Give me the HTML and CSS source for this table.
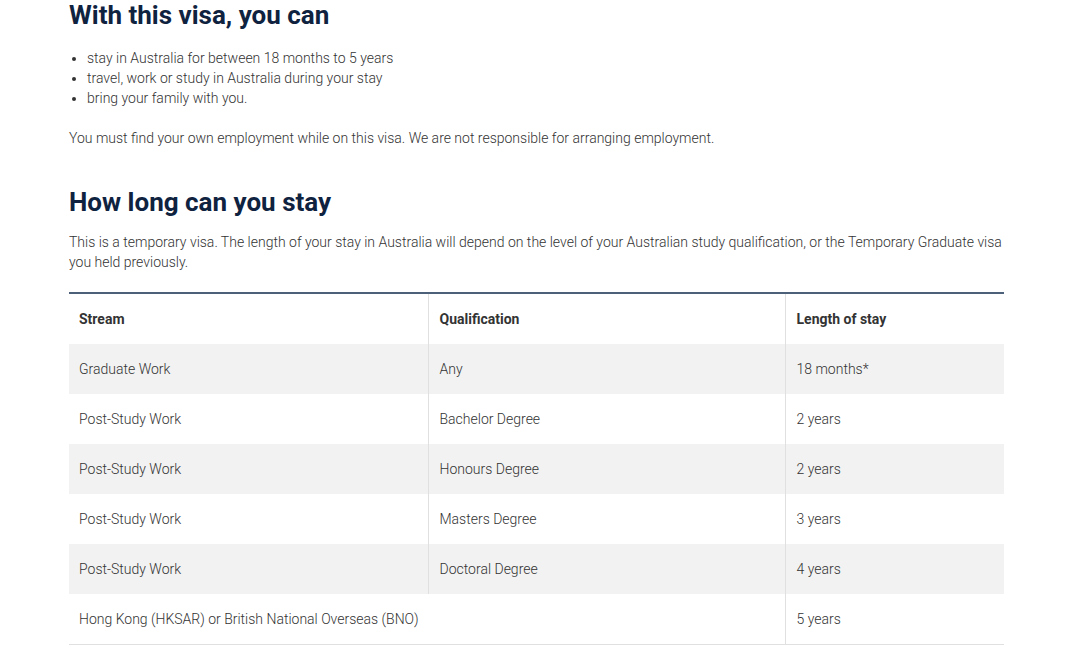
FILE: index.html
```html
<!DOCTYPE html>
<html lang="en">
<head>
<meta charset="utf-8">
<title>Temporary Graduate visa</title>
<link rel="stylesheet" href="styles.css">
</head>
<body>
<main class="content">
  <h2 class="heading heading--first">With this visa, you can</h2>
  <ul class="list">
    <li>stay in Australia for between 18 months to 5 years</li>
    <li>travel, work or study in Australia during your stay</li>
    <li>bring your family with you.</li>
  </ul>
  <p class="text">You must find your own employment while on this visa. We are not responsible for arranging employment.</p>

  <h2 class="heading heading--second">How long can you stay</h2>
  <p class="text text--intro">This is a temporary visa. The length of your stay in Australia will depend on the level of your Australian study qualification, or the Temporary Graduate visa you held previously.</p>

  <table class="stay-table">
    <colgroup>
      <col class="col-stream">
      <col class="col-qual">
      <col class="col-length">
    </colgroup>
    <thead>
      <tr>
        <th>Stream</th>
        <th>Qualification</th>
        <th>Length of stay</th>
      </tr>
    </thead>
    <tbody>
      <tr class="odd">
        <td>Graduate Work</td>
        <td>Any</td>
        <td>18 months*</td>
      </tr>
      <tr>
        <td>Post-Study Work</td>
        <td>Bachelor Degree</td>
        <td>2 years</td>
      </tr>
      <tr class="odd">
        <td>Post-Study Work</td>
        <td>Honours Degree</td>
        <td>2 years</td>
      </tr>
      <tr>
        <td>Post-Study Work</td>
        <td>Masters Degree</td>
        <td>3 years</td>
      </tr>
      <tr class="odd">
        <td>Post-Study Work</td>
        <td>Doctoral Degree</td>
        <td>4 years</td>
      </tr>
      <tr class="last">
        <td colspan="2">Hong Kong (HKSAR) or British National Overseas (BNO)</td>
        <td>5 years</td>
      </tr>
    </tbody>
  </table>
</main>
</body>
</html>
```

FILE: styles.css
```css
html, body {
  margin: 0;
  padding: 0;
  background: #ffffff;
}

body {
  font-family: Roboto, "Liberation Sans", Arial, sans-serif;
  font-size: 14px;
  font-weight: 300;
  line-height: 20px;
  color: #333333;
}

.content {
  width: 935px;
  padding-left: 69px;
}

.heading {
  font-size: 26px;
  line-height: 32px;
  font-weight: 700;
  color: #0f2340;
  margin: 0;
}

.heading--first {
  margin-top: -1px;
}

.heading--second {
  margin-top: 38px;
}

.list {
  margin: 17px 0 0;
  padding-left: 18px;
}

.list li {
  line-height: 20px;
}

.text {
  margin: 20px 0 0;
}

.text--intro {
  margin-top: 14px;
}

.stay-table {
  width: 935px;
  margin-top: 20px;
  border-collapse: collapse;
  table-layout: fixed;
  border-top: 2px solid #4d6079;
  border-bottom: 1px solid #e0e0e0;
}

.col-stream { width: 359px; }
.col-qual { width: 357px; }
.col-length { width: 219px; }

.stay-table th,
.stay-table td {
  height: 50px;
  padding: 0 10px 0 11px;
  text-align: left;
  vertical-align: middle;
  border-left: 1px solid #e0e0e0;
  box-sizing: border-box;
}

.stay-table th {
  height: 51px;
  font-weight: 700;
  color: #333333;
}

.stay-table th:first-child,
.stay-table td:first-child {
  border-left: none;
  padding-left: 10px;
}

.stay-table .odd td {
  background: #f2f2f2;
}
```
